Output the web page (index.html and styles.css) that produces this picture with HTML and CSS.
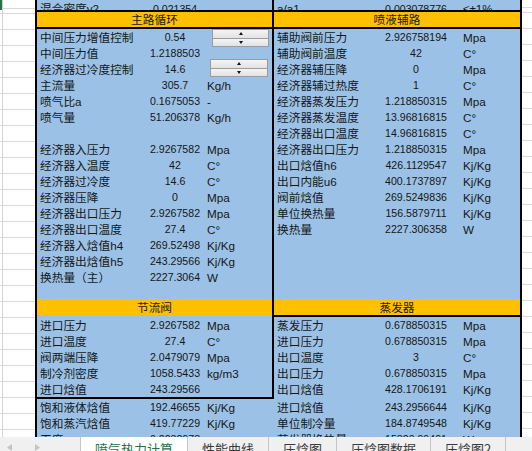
FILE: index.html
```html
<!DOCTYPE html>
<html lang="zh-CN">
<head>
<meta charset="utf-8">
<title>喷气热力计算</title>
<link rel="stylesheet" href="styles.css">
</head>
<body>
<div class="sheet">
  <div class="gutter-left"></div>

  <div class="panel panel-left">
    <div class="box-left">
      <div class="row row-l top"><span class="lbl">混合密度v2</span><span class="val">0.021354</span><span class="unit"></span></div>
      <div class="hdr hdr-b">主路循环</div>
      <div class="row row-l"><span class="lbl">中间压力增值控制</span><span class="val">0.54</span><span class="unit"></span></div>
      <div class="row row-l"><span class="lbl">中间压力值</span><span class="val">1.2188503</span><span class="unit"></span></div>
      <div class="row row-l"><span class="lbl">经济器过冷度控制</span><span class="val">14.6</span><span class="unit"></span></div>
      <div class="row row-l"><span class="lbl">主流量</span><span class="val">305.7</span><span class="unit">Kg/h</span></div>
      <div class="row row-l"><span class="lbl">喷气比a</span><span class="val">0.1675053</span><span class="unit">-</span></div>
      <div class="row row-l"><span class="lbl">喷气量</span><span class="val">51.206378</span><span class="unit">Kg/h</span></div>
      <div class="row row-l"></div>
      <div class="row row-l"><span class="lbl">经济器入压力</span><span class="val">2.9267582</span><span class="unit">Mpa</span></div>
      <div class="row row-l"><span class="lbl">经济器入温度</span><span class="val">42</span><span class="unit">C°</span></div>
      <div class="row row-l"><span class="lbl">经济器过冷度</span><span class="val">14.6</span><span class="unit">C°</span></div>
      <div class="row row-l"><span class="lbl">经济器压降</span><span class="val">0</span><span class="unit">Mpa</span></div>
      <div class="row row-l"><span class="lbl">经济器出口压力</span><span class="val">2.9267582</span><span class="unit">Mpa</span></div>
      <div class="row row-l"><span class="lbl">经济器出口温度</span><span class="val">27.4</span><span class="unit">C°</span></div>
      <div class="row row-l"><span class="lbl">经济器入焓值h4</span><span class="val">269.52498</span><span class="unit">Kj/Kg</span></div>
      <div class="row row-l"><span class="lbl">经济器出焓值h5</span><span class="val">243.29566</span><span class="unit">Kj/Kg</span></div>
      <div class="row row-l"><span class="lbl">换热量（主）</span><span class="val">2227.3064</span><span class="unit">W</span></div>
      <div class="row row-l short"></div>
      <div class="hdr hdr2">节流阀</div>
      <div class="gap"></div>
      <div class="row row-l"><span class="lbl">进口压力</span><span class="val">2.9267582</span><span class="unit">Mpa</span></div>
      <div class="row row-l"><span class="lbl">进口温度</span><span class="val">27.4</span><span class="unit">C°</span></div>
      <div class="row row-l"><span class="lbl">阀两端压降</span><span class="val">2.0479079</span><span class="unit">Mpa</span></div>
      <div class="row row-l"><span class="lbl">制冷剂密度</span><span class="val">1058.5433</span><span class="unit">kg/m3</span></div>
      <div class="row row-l"><span class="lbl">进口焓值</span><span class="val">243.29566</span><span class="unit"></span></div>
    </div>
    <div class="row row-l"><span class="lbl">饱和液体焓值</span><span class="val">192.46655</span><span class="unit">Kj/Kg</span></div>
    <div class="row row-l"><span class="lbl">饱和蒸汽焓值</span><span class="val">419.77229</span><span class="unit">Kj/Kg</span></div>
    <div class="row row-l"><span class="lbl">干度</span><span class="val">0.2232078</span><span class="unit"></span></div>

    <div class="spin spin-1"><span class="spin-btn"><i class="tri-up"></i></span><span class="spin-btn"><i class="tri-down"></i></span></div>
    <div class="spin spin-2"><span class="spin-btn"><i class="tri-up"></i></span><span class="spin-btn"><i class="tri-down"></i></span></div>
  </div>

  <div class="panel panel-right">
    <div class="row row-r top"><span class="lbl">a/a1</span><span class="val">0.003078776</span><span class="unit">≤±1%</span></div>
    <div class="hdr hdr-b">喷液辅路</div>
    <div class="row row-r"><span class="lbl">辅助阀前压力</span><span class="val">2.926758194</span><span class="unit">Mpa</span></div>
    <div class="row row-r"><span class="lbl">辅助阀前温度</span><span class="val">42</span><span class="unit">C°</span></div>
    <div class="row row-r"><span class="lbl">经济器辅压降</span><span class="val">0</span><span class="unit">Mpa</span></div>
    <div class="row row-r"><span class="lbl">经济器辅过热度</span><span class="val">1</span><span class="unit">C°</span></div>
    <div class="row row-r"><span class="lbl">经济器蒸发压力</span><span class="val">1.218850315</span><span class="unit">Mpa</span></div>
    <div class="row row-r"><span class="lbl">经济器蒸发温度</span><span class="val">13.96816815</span><span class="unit">C°</span></div>
    <div class="row row-r"><span class="lbl">经济器出口温度</span><span class="val">14.96816815</span><span class="unit">C°</span></div>
    <div class="row row-r"><span class="lbl">经济器出口压力</span><span class="val">1.218850315</span><span class="unit">Mpa</span></div>
    <div class="row row-r"><span class="lbl">出口焓值h6</span><span class="val">426.1129547</span><span class="unit">Kj/Kg</span></div>
    <div class="row row-r"><span class="lbl">出口内能u6</span><span class="val">400.1737897</span><span class="unit">Kj/Kg</span></div>
    <div class="row row-r"><span class="lbl">阀前焓值</span><span class="val">269.5249836</span><span class="unit">Kj/Kg</span></div>
    <div class="row row-r"><span class="lbl">单位换热量</span><span class="val">156.5879711</span><span class="unit">Kj/Kg</span></div>
    <div class="row row-r"><span class="lbl">换热量</span><span class="val">2227.306358</span><span class="unit">W</span></div>
    <div class="row row-r"></div>
    <div class="row row-r"></div>
    <div class="row row-r"></div>
    <div class="row row-r short"></div>
    <div class="hdr hdr2 hdr-b">蒸发器</div>
    <div class="row row-r"><span class="lbl">蒸发压力</span><span class="val">0.678850315</span><span class="unit">Mpa</span></div>
    <div class="row row-r"><span class="lbl">进口压力</span><span class="val">0.678850315</span><span class="unit">Mpa</span></div>
    <div class="row row-r"><span class="lbl">出口温度</span><span class="val">3</span><span class="unit">C°</span></div>
    <div class="row row-r"><span class="lbl">出口压力</span><span class="val">0.678850315</span><span class="unit">Mpa</span></div>
    <div class="row row-r"><span class="lbl">出口焓值</span><span class="val">428.1706191</span><span class="unit">Kj/Kg</span></div>
    <div class="gap"></div>
    <div class="row row-r"><span class="lbl">进口焓值</span><span class="val">243.2956644</span><span class="unit">Kj/Kg</span></div>
    <div class="row row-r"><span class="lbl">单位制冷量</span><span class="val">184.8749548</span><span class="unit">Kj/Kg</span></div>
    <div class="row row-r"><span class="lbl">蒸发器换热量</span><span class="val">15820.99401</span><span class="unit">W</span></div>
  </div>

  <div class="gutter-right"></div>
</div>

<div class="tabbar">
  <div class="nav">
    <svg class="arrow" width="5" height="7" viewBox="0 0 5 7"><path d="M5 0 L0 3.5 L5 7 Z" fill="#c4c4c4"/></svg>
    <svg class="arrow" width="5" height="7" viewBox="0 0 5 7"><path d="M0 0 L5 3.5 L0 7 Z" fill="#c4c4c4"/></svg>
  </div>
  <div class="tab active">喷气热力计算</div>
  <div class="tab">性能曲线</div>
  <div class="tab">压焓图</div>
  <div class="tab">压焓图数据</div>
  <div class="tab">压焓图2</div>
</div>
</body>
</html>
```

FILE: styles.css
```css
* {
  box-sizing: border-box;
  margin: 0;
  padding: 0;
}

html, body {
  width: 532px;
  height: 451px;
  overflow: hidden;
  background: #ffffff;
}

body {
  font-family: "Liberation Sans", "Noto Sans CJK SC", sans-serif;
  color: #161616;
}

.sheet {
  display: flex;
  height: 437px;
  overflow: hidden;
}

.gutter-left {
  width: 35px;
  flex: none;
  background:
    linear-gradient(#217346, #217346) no-repeat 0 0 / 2px 10px,
    linear-gradient(to right, transparent 2px, #d4d4d4 2px, #d4d4d4 3px, transparent 3px),
    repeating-linear-gradient(to bottom, #d9d9d9 0, #d9d9d9 1px, transparent 1px, transparent 16px) 0 13px;
}

.gutter-right {
  flex: 1;
  background:
    repeating-linear-gradient(to bottom, #d9d9d9 0, #d9d9d9 1px, transparent 1px, transparent 16px) 0 12px;
}

.panel {
  flex: none;
  display: flex;
  flex-direction: column;
  background: #9bc2e6;
  position: relative;
}

.panel-left {
  width: 239px;
  border-left: 2px solid #000;
}

.panel-right {
  width: 248px;
  border-right: 2px solid #000;
}

.box-left {
  display: flex;
  flex-direction: column;
  border-right: 2px solid #000;
  border-bottom: 2px solid #000;
}

.row {
  display: grid;
  height: 16px;
  flex: none;
  align-items: start;
  white-space: nowrap;
}

.row-l {
  grid-template-columns: 111px 54px 1fr;
}

.row-r {
  grid-template-columns: 110px 64px 1fr;
}

.row.top {
  height: 12px;
  align-items: end;
  border-bottom: 2px solid #000;
}

.row.short {
  height: 14px;
}

.lbl {
  font-size: 11.7px;
  line-height: 17px;
  padding-left: 3px;
}

.val {
  display: flex;
  justify-content: center;
  font-size: 10.6px;
  line-height: 17px;
}

.unit {
  font-size: 11.7px;
  line-height: 17px;
}

.row-l .unit {
  padding-left: 5px;
}

.row-r .unit {
  padding-left: 15px;
}

.row.top .lbl,
.row.top .val,
.row.top .unit {
  line-height: 18px;
}

.hdr {
  flex: none;
  height: 15px;
  background: #ffc000;
  text-align: center;
  font-size: 11.7px;
  line-height: 15px;
}

.hdr-b {
  height: 17px;
  border-bottom: 2px solid #000;
}

.hdr2 {
  height: 16px;
  line-height: 17px;
}

.hdr2.hdr-b {
  height: 18px;
}

.gap {
  flex: none;
  height: 2px;
}

/* spin buttons (form controls lying over the cells) */
.spin {
  position: absolute;
  display: flex;
  flex-direction: column;
  width: 57px;
  height: 18px;
}

.spin-1 {
  left: 175px;
  top: 29px;
}

.spin-2 {
  left: 173px;
  top: 59px;
  width: 58px;
}

.spin-btn {
  flex: 1;
  display: flex;
  align-items: center;
  justify-content: center;
  background: linear-gradient(#f4f4f4, #e2e2e2);
  border: 1px solid #9c9c9c;
}

.spin-btn + .spin-btn {
  border-top: none;
}

.tri-up {
  width: 0;
  height: 0;
  border-left: 2.5px solid transparent;
  border-right: 2.5px solid transparent;
  border-bottom: 3px solid #111;
}

.tri-down {
  width: 0;
  height: 0;
  border-left: 2.5px solid transparent;
  border-right: 2.5px solid transparent;
  border-top: 3px solid #111;
}

/* sheet tabs */
.tabbar {
  display: flex;
  height: 24px;
  background: #f0f0f0;
}

.nav {
  width: 81px;
  flex: none;
  display: flex;
  align-items: flex-start;
  gap: 23px;
  padding: 7px 0 0 7px;
  border-right: 1px solid #c6c6c6;
}

.arrow {
  display: block;
}

.tab {
  flex: none;
  padding: 3px 14px 0;
  font-family: "Noto Sans CJK SC", sans-serif;
  font-size: 13px;
  line-height: 18px;
  color: #3a3a3a;
  border-right: 1px solid #c6c6c6;
}

.tab.active {
  background: #ffffff;
  color: #217346;
}
```
